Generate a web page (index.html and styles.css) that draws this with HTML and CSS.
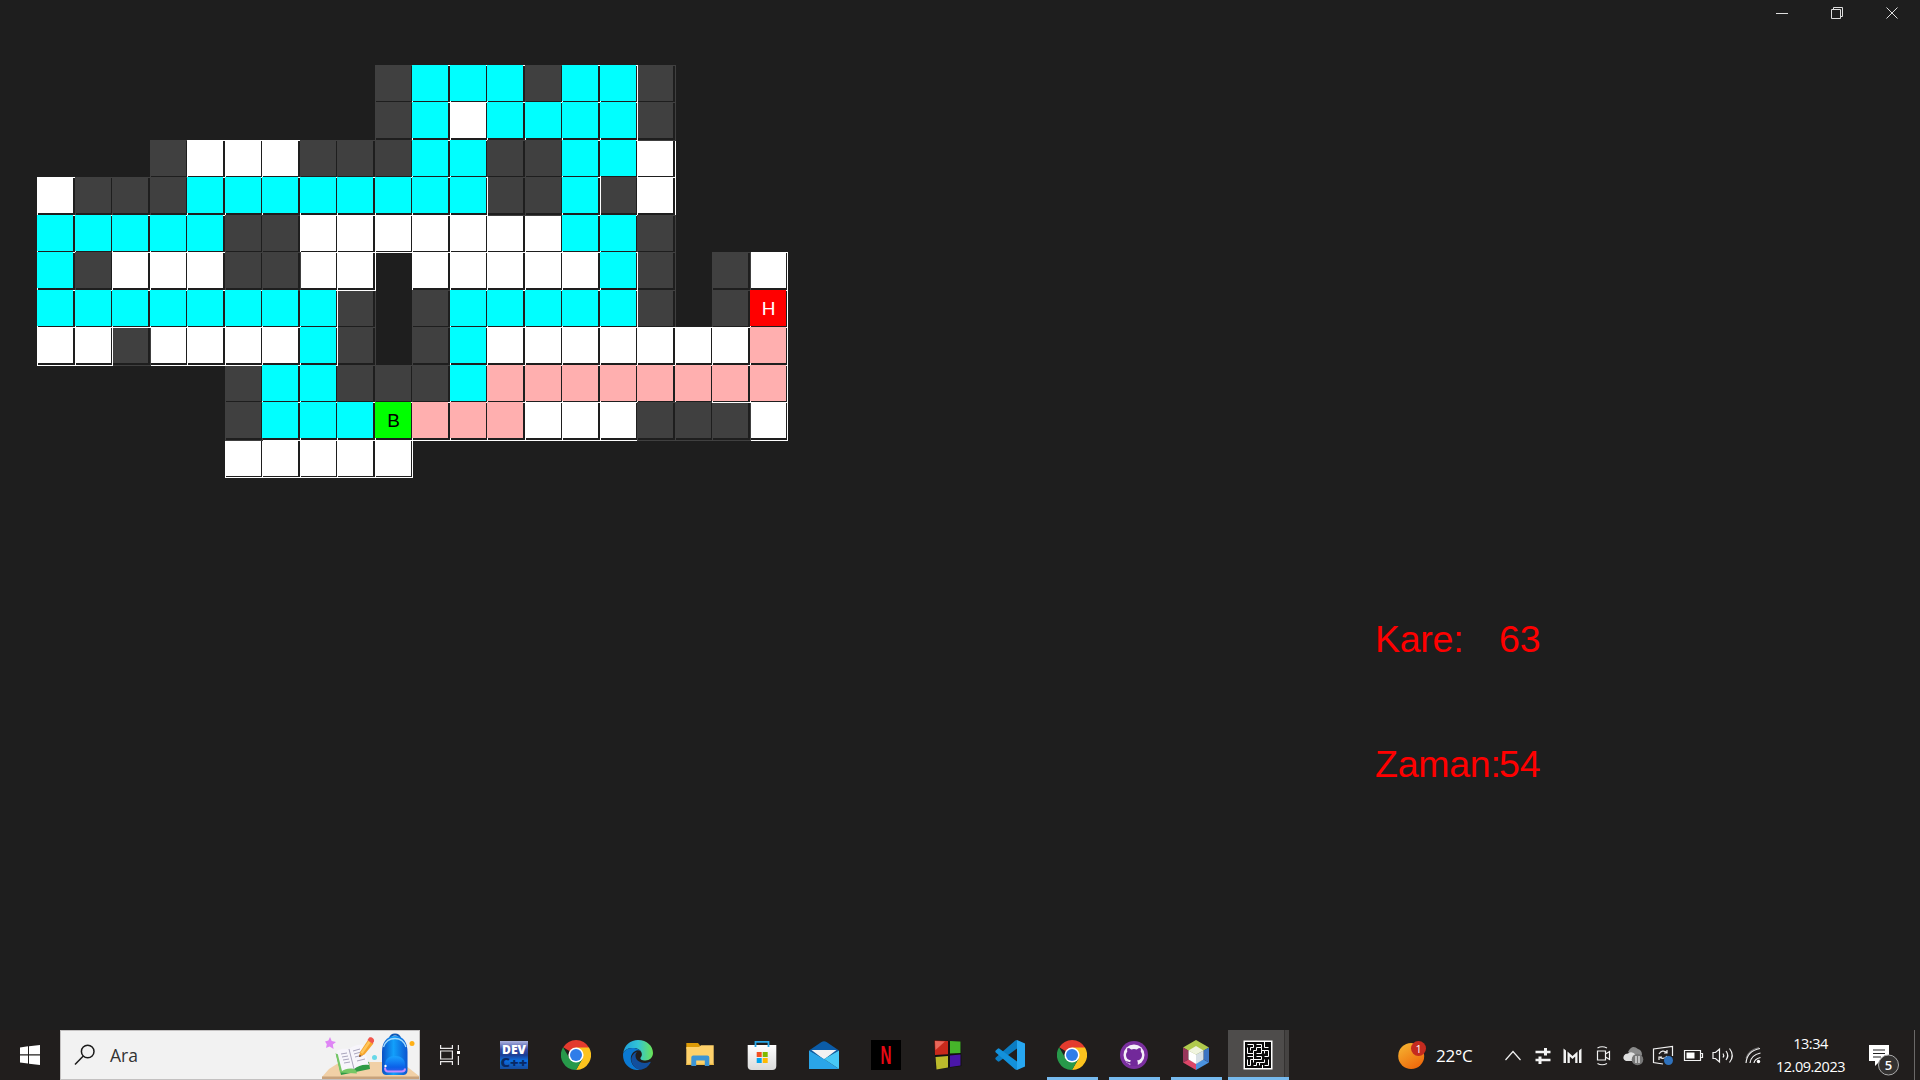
FILE: index.html
```html
<!DOCTYPE html>
<html lang="tr">
<head>
<meta charset="utf-8">
<title>Labirent</title>
<link rel="stylesheet" href="styles.css">
</head>
<body>
<svg class="defs" width="0" height="0">
  <symbol id="chrome" viewBox="0 0 30 30">
    <path fill="#e33b2e" d="M15 15 2.2 7.2A15 15 0 0 1 28 7.5Z"/>
    <path fill="#fcc31e" d="M15 7.5H28A15 15 0 0 1 15 30L21.5 18.7Z"/>
    <path fill="#27994a" d="M2.1 7.3A15 15 0 0 0 15 30L21.3 19 15 15 8.6 18.6Z"/>
    <circle cx="15" cy="15" r="7.6" fill="#fff"/><circle cx="15" cy="15" r="6" fill="#2f7de9"/>
  </symbol>
</svg>
<div class="desktop">
  <header class="titlebar">
    <svg class="win" viewBox="0 0 13 13"><path d="M0 7.500H12"/></svg>
    <svg class="win" viewBox="0 0 13 13"><path d="M.5 3.500h9v9h-9zM2.500 3.500v-2h9v9h-2"/></svg>
    <svg class="win" viewBox="0 0 13 13"><path d="M.5 1.500l11 11M11.500 1.500l-11 11"/></svg>
  </header>

  <main class="window">
    <div class="maze" id="maze"></div>
    <dl class="stats">
      <dt>Kare:</dt><dd>63</dd>
      <dt>Zaman:</dt><dd>54</dd>
    </dl>
  </main>

  <footer class="taskbar">
    <div class="start">
      <svg width="20" height="20" viewBox="0 0 20 20"><path fill="#fff" d="M0 2.500 8 1.300V9.300H0zM9 1.200 20 0V9.300H9zM0 10.400H8V18.600L0 17.500zM9 10.400H20V20L9 18.700z"/></svg>
    </div>
    <div class="search">
      <svg class="lens" viewBox="0 0 22 22" fill="none" stroke="#1b1b1b" stroke-width="1.500"><circle cx="13.700" cy="7.500" r="6.300"/><path d="M9.300 12 1 20.500"/></svg>
      <span class="search-label">Ara</span>
      <svg class="art" viewBox="0 0 98 48">
        <defs>
          <linearGradient id="bag" x1="0" x2="1"><stop offset="0" stop-color="#0a4fc4"/><stop offset=".45" stop-color="#12a0fb"/><stop offset="1" stop-color="#0b55d0"/></linearGradient>
          <linearGradient id="pocket" x1="0" y1="0" x2="0" y2="1"><stop offset="0" stop-color="#1aa2ff"/><stop offset=".7" stop-color="#0b60e8"/><stop offset="1" stop-color="#3a5bea"/></linearGradient>
        </defs>
        <path fill="#f1d0a6" d="M1 46 8 38 19 31H80L98 45V48H1z"/><path fill="#c8a27b" d="M1 45.500H98V48H1z"/>
        <path fill="#df86f5" d="M9 6l1.700 4 4.300 1-3.200 2.600.8 4.400-4-2.600-3.600 1.600.8-3.800L4 10.600l3.400-1.200z"/>
        <path fill="#2f9b45" d="M15 23l5 21 29-6-1-7z"/><path fill="#76c765" d="M14.500 22 19 41.500l17 1-1-3z"/>
        <path fill="#f7f5fb" d="M16 20c5-3 8-2 12-2 4-3 9-5 14-4l6 20c-6-1-11 1-15 4-5-1-9 0-12 2z"/>
        <path stroke="#aaa6bd" fill="none" d="M28 18l5 20M20 23l6-1M21 26l6-1M22 29l6-1M23 32l6-1M32 20l7-2M33 23l7-2M34 26l8-2M36 30l8-2"/>
        <path fill="#f6a52d" d="M38 26l1-5 8-12 5.500 3.500-9 11z"/><path fill="#ffc75b" d="M39.500 21.500 47.500 10l2 1.500L41.500 23z"/><path fill="#f2564d" d="M46.500 9l1.500-2.300c2-1.400 5.700.8 5 3.500l-1.300 2.600z"/><path fill="#704534" d="M38 26l.6-2.400 2 1.600z"/>
        <circle cx="53.500" cy="26.500" r="2.500" fill="#67d8e8"/><circle cx="91" cy="12.500" r="2.500" fill="#ffb016"/>
        <path d="M69 8c0-6 10-6 10 0" fill="none" stroke="#0c57b5" stroke-width="2"/>
        <path fill="url(#bag)" d="M61 21c0-9 4-16 13-16s12.500 7 12.500 16v18c0 4-2 5-5 5H66c-3 0-5-1-5-5z"/>
        <path d="M62.500 16c2-6 6-8.500 11.500-8.500S83 10 85 16" fill="none" stroke="#9fdcff" stroke-width="1.300"/>
        <path fill="url(#pocket)" d="M64 34c0-6 4-9 10-9s10 3 10 9v4c0 2-1 3-3 3H67c-2 0-3-1-3-3z"/>
        <path d="M64 36.500c0 3 1 4 3 4h14c2 0 3-1 3-3" fill="none" stroke="#c38cff" stroke-width="2"/><circle cx="64.500" cy="35" r="1.200" fill="#fff"/>
      </svg>
    </div>
    <div class="slot view">
      <svg width="20" height="20" viewBox="0 0 20 20" fill="none" stroke="#e9e8e8" stroke-width="1.200"><path d="M.6 0v3.400H12.400V0M.6 20v-3.400H12.400V20M.6 6H12.400V14H.6zM18.400 0V5M18.400 11V20"/><path fill="#fff" stroke="none" d="M17 6h3v3h-3z"/></svg>
    </div>
    <nav class="apps">
      <div class="slot"><svg class="ico" viewBox="0 0 30 30">
        <defs><linearGradient id="dev" x1="0" y1="0" x2="0" y2="1"><stop offset="0" stop-color="#aeb4e0"/><stop offset=".3" stop-color="#3a4ba4"/><stop offset=".5" stop-color="#1b3e94"/><stop offset=".7" stop-color="#0b6ee0"/><stop offset="1" stop-color="#164c9d"/></linearGradient></defs>
        <path fill="url(#dev)" d="M1 1h28v28H1z"/><text class="dev"><tspan x="3" y="14" textLength="24" lengthAdjust="spacingAndGlyphs" fill="#fff">DEV</tspan><tspan x="1.500" y="27" textLength="27" lengthAdjust="spacingAndGlyphs" fill="#092863">C++</tspan></text></svg></div>
      <div class="slot"><svg class="ico"><use href="#chrome"/></svg></div>
      <div class="slot"><svg class="ico" viewBox="0 0 30 30">
        <defs><linearGradient id="edg" x1="0" x2="1"><stop offset="0" stop-color="#1c9fdc"/><stop offset=".5" stop-color="#33c4d5"/><stop offset="1" stop-color="#6be454"/></linearGradient></defs>
        <path fill="url(#edg)" d="M.2 13C1.500 5 7.500 0 15 0c9 0 15 6 15 13 0 4.500-3.500 7.500-7.500 7.500-4 0-5.500-1.500-5-2.800 1-1.200 1.500-2.200 1.300-4C18.500 10 14.500 8 9.500 8 5 8 1.500 10 .2 13z"/>
        <path fill="#0b79d2" d="M.2 13C2 9.500 5.500 8 9.500 8c5 0 9 2.500 9.300 6 0-2-2-3.700-4-3.700C10 11 7 15.500 8 20.500c1 5 5 8.500 9.500 9.300C8 31.500 0 24.500 0 15z"/>
        <path fill="#124f9d" d="M14.500 11.500C10 13 7.500 17 8.500 21.500 10 27 14.500 30 18 29.700c4-.8 7.500-3.200 9.500-7 .3-.8-.3-1-1-.7-6 2.500-14 0-14-6.500 0-1.700.8-3 2-4z"/></svg></div>
      <div class="slot"><svg class="ico" viewBox="0 0 30 30"><path fill="#dc9a06" d="M1.300 3H13l2 2.500V9H1.300z"/><path fill="#fed16a" d="M1.300 7H14l2-1.700h12.700V25H1.300z"/><path fill="#eebb45" d="M1.300 23.700H28.700V25H1.300z"/><path fill="#3c95d5" d="M6.300 26V17.500q0-2 2-2h14q2 0 2 2V26h-4.500v-5.500h-8.600V26z"/></svg></div>
      <div class="slot"><svg class="ico" viewBox="0 0 30 30"><defs><linearGradient id="shop" x1="0" y1="0" x2="0" y2="1"><stop offset="0" stop-color="#fff"/><stop offset="1" stop-color="#dadada"/></linearGradient></defs><path fill="url(#shop)" d="M.7 5H29.300V26q0 4-4 4H4.700q-4 0-4-4z"/><path d="M8.500 7V1.800h13V7" fill="none" stroke="#28a7e8" stroke-width="1.800"/><path fill="#f25022" d="M9.700 12h5v5h-5z"/><path fill="#7fba00" d="M15.700 12h5v5h-5z"/><path fill="#00a4ef" d="M9.700 18h5v5h-5z"/><path fill="#ffb900" d="M15.700 18h5v5h-5z"/></svg></div>
      <div class="slot"><svg class="ico" viewBox="0 0 30 30"><path fill="#0b5ca8" d="M0 10.500 12.500 2q2.500-1.500 5 0L30 10.500 15 19z"/><path fill="#f2f2f2" d="M2.500 10h25L15 19.500z"/><path fill="#2aa5e8" d="M0 10.500 15 19 30 29H0z"/><path fill="#47c8f5" d="M30 10.500V29L15 19z"/></svg></div>
      <div class="slot"><svg class="ico" viewBox="0 0 30 30"><path d="M0 0h30v30H0z"/><text class="flix" x="9.500" y="24" textLength="11" lengthAdjust="spacingAndGlyphs">N</text></svg></div>
      <div class="slot"><svg class="ico" viewBox="0 0 30 30"><path d="M1 0 28 1.500 28.500 26 3 29.500z" fill="#111"/><path fill="#c8291b" d="M1.500.5 15 1V14.300L2 15z"/><path fill="#e8675a" d="M2 1l10 .5L2.500 10z"/><path fill="#46b52a" d="M17 1l10.500.5V13L17 13.500z"/><path fill="#bcbb2c" d="M2.500 17 15 16V27.500L3.500 29.500z"/><path fill="#4a16a8" d="M17 15.500 27.500 14.500V25.500L17 27z"/></svg></div>
      <div class="slot"><svg class="ico" viewBox="0 0 30 30"><path fill="#0b7cc2" d="M22 8.500 4.500 21.300Q3.600 22 2.700 21.200L.7 19.400Q-.1 18.500.8 17.600L20 .7Q21 0 22 0z"/><path fill="#1391db" d="M22 21.500 4.500 8.700Q3.600 8 2.700 8.800L.7 10.600Q-.1 11.500.8 12.400L20 29.300Q21 30 22 30z"/><path fill="#27a7f1" d="M22 0 30 3.500V26.500L22 30z"/></svg></div>
      <div class="slot running"><svg class="ico"><use href="#chrome"/></svg></div>
      <div class="slot running"><svg class="ico" viewBox="0 0 30 30"><circle cx="15" cy="15" r="14" fill="#7b2f9f"/><circle cx="15" cy="15" r="10.500" fill="#f4eff7"/><path fill="#72299a" d="M8.500 8q2 0 3.700 1.400 2.800-.7 5.600 0Q19.500 8 21.500 8q.8 1.800.2 3.500 1.300 1.500 1.300 3.500 0 4.800-5 5.500.8 1 .8 2V26h-7.500v-2.500c-3 .5-3.300-1.700-4.800-2.500 2-.3 2.500 1.500 4.800.8q0-.8.700-1.400Q7 19.600 7 15q0-2 1.300-3.500Q7.700 9.800 8.500 8z"/></svg></div>
      <div class="slot running"><svg class="ico" viewBox="0 0 30 30"><path fill="#b0ca4d" d="M15 0 28 7.500 15 15 2 7.500z"/><path fill="#97365a" d="M2 7.500 7.500 10.500v9L2 22.500z"/><path fill="#dc4668" d="M2 22.500 7.500 19.500 15 23.500V30z"/><path fill="#4b93df" d="M28 22.500 15 30V23.500L22.500 19.500z"/><path fill="#3b73c2" d="M28 7.500v15L22.500 19.500v-9z"/><path fill="#f0f4df" d="M15 6 22.500 10.500 15 14.500 7.500 10.500z"/><path fill="#fff" d="M7.500 10.500 15 14.500V24L7.500 19.500z"/><path fill="#d7dfe5" d="M22.500 10.500v9L15 24V14.500z"/></svg></div>
      <div class="slot active"><svg class="ico" viewBox="0 0 30 30"><path fill="#fff" d="M.5.500h29v29H.5z"/><path fill="#0b0b0b" d="M2 2h26v26H2z"/><path fill="none" stroke="#fff" stroke-width="1" d="M4.500 4.500h6v3h-3v3M13.500 4.500h5v3h-5v3h-3M21.500 2v5.500h4M4.500 7.500v6h6v-3M21.500 10.500h4v6h-4M18.500 7.500v3M13.500 13.500h5v-3h3v3M4.500 16.500h6v-3M13.500 16.500h5v3h-8v-3M4.500 19.500v6h3v-6h3v3M10.500 25.500h3v-3h3M16.500 25.500v-3h5v-3M21.500 25.500h4v-6M19.500 28v-3"/></svg></div>
    </nav>
    <div class="weather">
      <svg width="30" height="30" viewBox="0 0 30 30"><defs><linearGradient id="sun" x1="0" y1="0" x2=".6" y2="1"><stop offset="0" stop-color="#f6b934"/><stop offset="1" stop-color="#ee6b0c"/></linearGradient></defs><circle cx="13.200" cy="16" r="13" fill="url(#sun)"/><circle cx="20.500" cy="8.500" r="7.500" fill="#c42b1f"/><text class="badge1" x="20.500" y="12.500">1</text></svg>
      <span>22°C</span>
    </div>
    <div class="tray">
      <svg viewBox="0 0 30 30"><path d="M7.500 20 15 11.500 22.500 20"/></svg>
      <svg viewBox="0 0 30 30"><path stroke-width="2.600" d="M7.500 12h15M7.500 20h15"/><path stroke-width="3" d="M17.500 8v7.500M12 16.500V24"/></svg>
      <svg viewBox="0 0 30 30"><g stroke="none" fill="#f2f2f2"><path d="M5.500 8.500 8 10.500V23H5.500zM23.500 8.500 21 10.500V23h2.500zM9.500 11.500l5 4.500 5-4.500V23h-2.300v-6.500L14.500 19l-2.700-2.500V23H9.500z"/></g></svg>
      <svg viewBox="0 0 30 30"><path d="M9.500 11h8v9h-8zM17.500 14l4-2.500v8l-4-2.500M9.500 8Q14 5.500 19 8M9.500 23.500Q14 26 19 23.500"/></svg>
      <svg viewBox="0 0 30 30"><g stroke="none"><path fill="#8a8a8a" d="M10 12q4-8 10-3 4 1 4 6l-5 4z"/><path fill="#dedede" d="M8 21q-4-2-2-5.500 1-2 4-2 4-3 8 1.500l-1 6z"/><circle cx="19.500" cy="19.500" r="5.800" fill="#777"/></g><path d="M18 16v7M21 16v7"/></svg>
      <svg viewBox="0 0 30 30"><path d="M15 24 5.500 22.500V9L24.500 6.500V16M11 14q3-5 8-1.500M19 10v3h-3M19 16q-3 4-7 1.500M11 20v-3h3"/><circle cx="20.500" cy="20.500" r="4.500" fill="#2f72bd" stroke="none"/></svg>
      <svg viewBox="0 0 30 30"><path d="M6.500 10.500h16v10h-16zM23 13.500h1.500v4H23"/><path fill="#fff" stroke="none" d="M8.500 12.500h8v6h-8z"/></svg>
      <svg viewBox="0 0 30 30"><path d="M5 12.500h2.500L11.500 9v13l-4-3.500H5zM15 13.500q1.500 2 0 4M18 11q3.500 4.500 0 9M21.500 8.500q5.500 7 0 14"/></svg>
      <svg viewBox="0 0 30 30"><path d="M8 23Q9 11 22 8.500M12 23q1-8 10.500-10M16 23q.5-4 6.500-5.500" /><path d="M8 18.500Q10 10 21 7.500" opacity=".4"/><circle cx="20.500" cy="21.500" r="1.700" fill="#fff" stroke="none"/></svg>
    </div>
    <div class="clock"><span>13:34</span><span>12.09.2023</span></div>
    <div class="notes">
      <svg width="32" height="34" viewBox="0 0 32 34"><path fill="#fff" d="M0 0h20v16h-9l-5 5v-5H0z"/><path d="M4 5h12M4 8.500h12M4 12h8" stroke="#222" stroke-width="1.200"/><circle cx="19.500" cy="20" r="10" fill="#343231" stroke="#aaa"/><text class="badge5" x="19.500" y="24.800">5</text></svg>
    </div>
    <div class="peek"></div>
  </footer>
</div>
<script src="maze.js"></script>
</body>
</html>
```
FILE: styles.css
```css
body { margin: 0; overflow: hidden; background: #1e1e1e; }
.defs { display: block; height: 0; }
.desktop { width: 1920px; height: 1080px; display: flex; flex-direction: column; background: #1e1e1e; font-family: "Liberation Sans", Arial, sans-serif; }
.titlebar { height: 26px; display: flex; justify-content: flex-end; gap: 42px; padding-right: 21px; box-sizing: border-box; }
.win { width: 13px; height: 13px; margin-top: 6px; fill: none; stroke: #dedede; stroke-width: 1; }
.window { flex: 1; display: flex; align-items: flex-start; }

.maze { display: grid; margin: 39px 0 0 37px; width: 750px;
  grid-template-columns: repeat(10, 38px 37px);
  grid-template-rows: repeat(5, 37px 38px) 37px; }
.cell { margin: 0 -1px -1px 0; --edge: #fff; --fill: #fff; background-color: var(--edge);
  background-image: linear-gradient(var(--fill), var(--fill)), linear-gradient(#1e1e1e, #1e1e1e);
  background-size: 36px 36px, calc(100% - 2px) calc(100% - 2px);
  background-position: 0 0, 1px 1px; background-repeat: no-repeat; }
.wall { --edge: #404040; --fill: #404040; }
.mark { position: relative; z-index: 1; box-sizing: border-box; width: 36px; height: 36px; padding-left: 1px; line-height: 38px; text-align: center; font-size: 19px; }
.visited { background: #0ff; }
.path { background: #ffafaf; }
.begin { background: #0f0; color: #000; }
.target { background: #f00; color: #fff; }

.stats { margin: 592px 0 0 588px; display: grid; grid-template-columns: 124px auto; grid-auto-rows: 43px; row-gap: 82px; font-size: 37.500px; line-height: 43px; color: #f00; white-space: nowrap; }
.stats dt { letter-spacing: -.25px; }
.stats dd { margin: 0; }

.taskbar { height: 50px; display: flex; align-items: stretch; background: #211e1d; color: #fff; font-family: "Open Sans", "Noto Sans", sans-serif; }
.start { width: 60px; display: flex; align-items: center; justify-content: center; }
.search { width: 360px; box-sizing: border-box; border: 1px solid #c3c1c1; background: #f2f2f2; display: flex; align-items: center; }
.lens { width: 22px; height: 22px; margin-left: 13px; }
.search-label { margin-left: 14px; color: #333; font-size: 17.500px; flex: 1; }
.art { width: 98px; height: 48px; }
.view { width: 60px; margin-right: 3px; }
.slot { display: flex; align-items: center; justify-content: center; box-sizing: border-box; }
.apps { display: flex; width: 915px; }
.apps .slot { width: 62px; flex: none; }
.ico { width: 30px; height: 30px; }
.running { background: linear-gradient(#76b9ed, #76b9ed) center bottom / 51px 3px no-repeat; }
.apps .active { width: 61px; margin-left: 1px; padding-right: 2px; background: linear-gradient(#76b9ed, #76b9ed) center bottom / 100% 3px no-repeat, linear-gradient(90deg, #4e4c4b 56px, #343231 56px, #343231 57px, #454342 57px); }
.dev { font: 800 12.500px "Open Sans", sans-serif; }
.flix { font: 700 25px "Liberation Sans", sans-serif; fill: #e50914; }
.weather { width: 100px; display: flex; align-items: center; gap: 8px; font-size: 17px; letter-spacing: -.2px; }
.badge1 { font-size: 11px; fill: #fff; text-anchor: middle; }
.tray { display: flex; align-items: center; width: 270px; }
.tray svg { width: 30px; height: 30px; fill: none; stroke: #f2f2f2; stroke-width: 1.200; }
.clock { width: 86px; display: flex; flex-direction: column; align-items: center; font-size: 14.500px; line-height: 23px; letter-spacing: -.5px; padding: 2px 1px 0 0; box-sizing: border-box; }
.notes { width: 60px; padding: 15px 0 0 15px; box-sizing: border-box; }
.badge5 { font-size: 13px; font-weight: 600; fill: #fff; text-anchor: middle; }
.peek { width: 1px; background: #6b6968; }
```
FILE: maze.js
```js
// # wall, o open, c visited, p path, B begin, H target, . unexplored
const rows = [
  ".........#ccc#cc#...",
  ".........#cocccc#...",
  "...#ooo###cc##cco...",
  "o###cccccccc##c#o...",
  "ccccc##ooooooocc#...",
  "c#ooo##oo.oooooc#.#o",
  "cccccccc#.#ccccc#.#H",
  "oo#ooooc#.#cooooooop",
  ".....#cc###cpppppppp",
  ".....#cccBpppooo###o",
  ".....ooooo.........."
];
// Cells painted after their right or lower neighbour, as "row,column"
const later = {
  "0,15": 1, "1,16": 1, "1,15": 2, "3,14": 1, "3,12": 1, "3,13": 1, "3,11": 2,
  "5,15": 1, "5,6": 1, "5,8": 1, "6,7": 1, "7,7": 1, "5,18": 1, "6,15": 1,
  "7,2": 1, "7,1": 2, "6,2": 2, "7,5": 1, "9,18": 1, "8,18": 2, "9,5": 1
};
const marks = { c: "visited", p: "path", B: "begin", H: "target" };
const maze = document.getElementById("maze");
rows.forEach((row, r) => [...row].forEach((kind, c) => {
  if (kind === ".") return;
  const cell = document.createElement("div");
  cell.className = kind === "#" ? "cell wall" : "cell";
  cell.style.gridArea = `${r + 1} / ${c + 1}`;
  cell.style.order = later[`${r},${c}`] || 0;
  if (marks[kind]) {
    const mark = document.createElement("div");
    mark.className = "mark " + marks[kind];
    if (kind === "B" || kind === "H") mark.textContent = kind;
    cell.append(mark);
  }
  maze.append(cell);
}));
```
